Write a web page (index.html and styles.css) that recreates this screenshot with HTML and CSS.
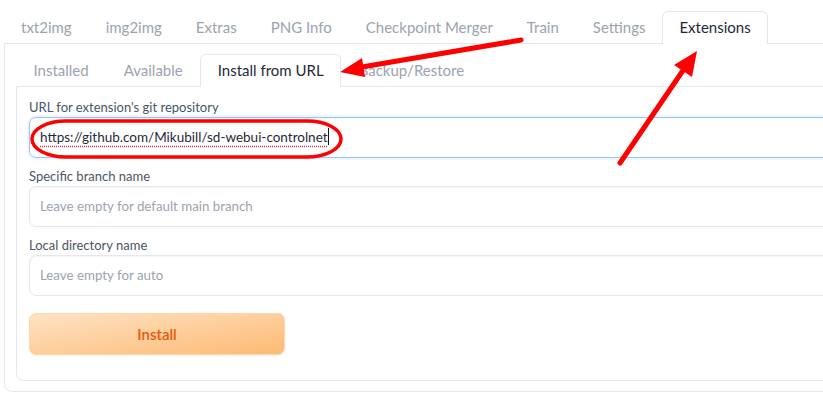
FILE: index.html
```html
<!DOCTYPE html>
<html>
<head>
<meta charset="utf-8">
<title>Extensions</title>
<link rel="stylesheet" href="styles.css">
</head>
<body>
<div class="app">
  <div class="tabs top-tabs">
    <span class="tab">txt2img</span>
    <span class="tab">img2img</span>
    <span class="tab">Extras</span>
    <span class="tab">PNG Info</span>
    <span class="tab">Checkpoint Merger</span>
    <span class="tab">Train</span>
    <span class="tab">Settings</span>
    <span class="tab selected">Extensions</span>
  </div>
  <div class="panel outer">
    <div class="tabs sub-tabs">
      <span class="tab">Installed</span>
      <span class="tab">Available</span>
      <span class="tab selected">Install from URL</span>
      <span class="tab">Backup/Restore</span>
    </div>
    <div class="panel inner">
      <div class="field">
        <label>URL for extension's git repository</label>
        <div class="textbox focused"><span class="misspelt">https://github.com/Mikubill/sd-webui-controlnet</span><span class="caret"></span></div>
      </div>
      <div class="field">
        <label>Specific branch name</label>
        <div class="textbox placeholder">Leave empty for default main branch</div>
      </div>
      <div class="field">
        <label>Local directory name</label>
        <div class="textbox placeholder">Leave empty for auto</div>
      </div>
      <button class="btn-install">Install</button>
    </div>
  </div>
</div>

<!-- annotations drawn over the screenshot -->
<svg class="marks" width="823" height="399" viewBox="0 0 823 399">
  <g fill="none" stroke="#f00" stroke-linecap="round">
    <rect x="32" y="121" width="309" height="36" rx="34" ry="18" stroke-width="3.5"/>
    <line x1="521" y1="40" x2="356" y2="68" stroke-width="5"/>
    <line x1="620" y1="163" x2="686" y2="66" stroke-width="5"/>
  </g>
  <g fill="#f00">
    <polygon points="340,72 362,58 365,77"/>
    <polygon points="697,51 674,65 692,77"/>
  </g>
</svg>
</body>
</html>
```
FILE: styles.css
```css
html, body {margin: 0; background: #fff; overflow: hidden;}
body {font-family: "Source Sans Pro", "Lato", "Noto Sans", sans-serif; color: #1f2937;}
.app {width: 900px; padding: 11px 0 0 4px; position: relative;}

/* tab rows */
.tabs {display: flex; align-items: flex-end;}
.tab {height: 32px; line-height: 31px; padding: 0 16px; font-size: 15px; color: #9ca3af; border: 1px solid transparent; border-bottom: 0; border-radius: 6px 6px 0 0; box-sizing: border-box;}
.tab.selected {color: #1f2937; background: #fff; border-color: #e5e7eb; margin-bottom: -1px; height: 33px; position: relative; z-index: 1;}
.sub-tabs .tab {padding: 0 16.5px;}

/* panels */
.panel {border: 1px solid #e5e7eb; border-radius: 0 0 8px 8px;}
.outer {padding: 10px 0 10px 11px;}
.inner {padding: 10px 0 25px 12px; display: flex; flex-direction: column; gap: 8px;}

.field label {display: block; font-size: 13px; line-height: 20px; color: #4b5563; margin-bottom: 0;}
.textbox {height: 41px; box-sizing: border-box; border: 1px solid #e5e7eb; border-radius: 7px; padding: 0 10px; font-size: 14px; line-height: 39px; color: #1f2937; box-shadow: inset 0 1px 2px rgba(0,0,0,0.04);}
.textbox.placeholder {color: #9ca3af; font-size: 13.3px;}
.textbox.focused {border-color: #93c5fd; box-shadow: 0 0 0 2px #eff6ff; font-size: 13.5px;}
.misspelt {text-decoration: underline dotted #e11d48; text-underline-offset: 4px;}
.caret {display: inline-block; width: 1px; height: 17px; background: #111; vertical-align: -3px;}

.btn-install {margin-top: 9px; width: 256px; height: 42px; border: 1px solid #fed7aa; border-radius: 7px; background: linear-gradient(to bottom right, #fee2c4, #fdba74); color: #ea580c; font: 600 15px "Source Sans Pro", "Lato", "Noto Sans", sans-serif; box-shadow: 0 1px 2px rgba(0,0,0,0.05);}

.marks {position: absolute; left: 0; top: 0; pointer-events: none;}
```
